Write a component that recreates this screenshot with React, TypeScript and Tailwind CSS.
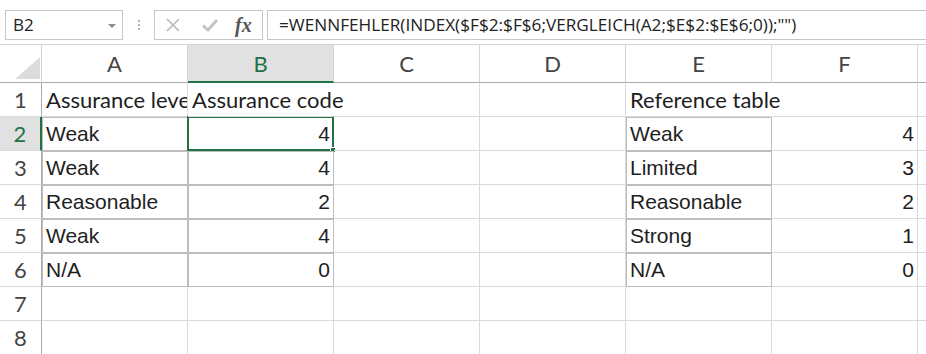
type CellValue = string | number | null;

const COLUMNS = ['A', 'B', 'C', 'D', 'E', 'F'];

const ROWS: CellValue[][] = [
  ['Assurance level', 'Assurance code', null, null, 'Reference table', null],
  ['Weak', 4, null, null, 'Weak', 4],
  ['Weak', 4, null, null, 'Limited', 3],
  ['Reasonable', 2, null, null, 'Reasonable', 2],
  ['Weak', 4, null, null, 'Strong', 1],
  ['N/A', 0, null, null, 'N/A', 0],
  [null, null, null, null, null, null],
  [null, null, null, null, null, null],
];

const FORMULA = '=WENNFEHLER(INDEX($F$2:$F$6;VERGLEICH(A2;$E$2:$E$6;0));"")';

// cells that carry the "all borders" format
function hasBorder(row: number, col: number) {
  if (row < 1 || row > 5) return false;
  return col === 0 || col === 1 || col === 4;
}

function FormulaBar() {
  return (
    <div className="mt-[10px] flex h-[30px] items-stretch font-['Open_Sans',sans-serif]">
      <div className="ml-[5px] flex w-[118px] items-center justify-between border border-[#c6c6c6] pl-[7px] pr-[6px] text-[17px] text-[#222]">
        <span>B2</span>
        <span className="mt-[1px] h-0 w-0 border-x-[4px] border-t-[4px] border-x-transparent border-t-[#8a8a8a]" />
      </div>
      <div className="flex w-[31px] flex-col items-center justify-center gap-[2px]">
        <span className="h-[2px] w-[2px] bg-[#b5b5b5]" />
        <span className="h-[2px] w-[2px] bg-[#b5b5b5]" />
        <span className="h-[2px] w-[2px] bg-[#b5b5b5]" />
      </div>
      <div className="flex w-[109px] items-center border border-[#c6c6c6]">
        <svg className="ml-[10px]" width="16" height="16" viewBox="0 0 16 16">
          <path d="M2 2 L14 14 M14 2 L2 14" stroke="#b9b9b9" strokeWidth="1.6" fill="none" />
        </svg>
        <svg className="ml-[20px]" width="18" height="16" viewBox="0 0 18 16">
          <path d="M2 8.5 L7 13 L16 3" stroke="#c4c4c4" strokeWidth="3" fill="none" />
        </svg>
        <span className="ml-[16px] font-['Liberation_Serif',serif] text-[20px] font-bold italic leading-none text-[#555]">
          fx
        </span>
      </div>
      <div className="ml-[4px] flex flex-1 items-center overflow-hidden whitespace-nowrap border border-r-0 border-[#c6c6c6] pl-[11px] text-[17.2px] text-[#222]">
        {FORMULA}
      </div>
    </div>
  );
}

function Cell({ value, row, col }: { value: CellValue; row: number; col: number }) {
  const bordered = hasBorder(row, col);
  const selected = row === 1 && col === 1;
  const isNumber = typeof value === 'number';
  // text in row 1 spills over into the empty neighbour
  const spills = row === 0 && (col === 1 || col === 4);
  const clipped = row === 0 && col === 0;

  return (
    <div
      className={`relative flex h-[34px] items-center whitespace-nowrap border-b ${
        spills ? 'border-r border-r-transparent' : 'border-r'
      } ${
        bordered
          ? 'border-[#bdbdbd] shadow-[inset_1px_1px_0_#bdbdbd]'
          : 'border-b-[#dadada] border-r-[#dadada]'
      } ${spills ? 'z-10 overflow-visible' : ''} ${clipped ? 'overflow-hidden' : ''} ${
        row === 0
          ? "font-['Lato',sans-serif] text-[22px]"
          : "font-['Liberation_Sans',Arial,sans-serif] text-[21px]"
      } ${isNumber ? 'justify-end pr-[3px]' : 'pl-[4px]'}`}
    >
      {value !== null ? <span>{value}</span> : null}
      {selected ? (
        <>
          <span className="pointer-events-none absolute -left-[1px] -top-[1px] bottom-[-1px] right-[-1px] border-2 border-[#217346]" />
          <span className="absolute -bottom-[3px] -right-[3px] h-[6px] w-[6px] border border-white bg-[#217346]" />
        </>
      ) : null}
    </div>
  );
}

export default function App() {
  return (
    <div className="h-[354px] w-[926px] overflow-hidden bg-white">
      <FormulaBar />

      <div className="mt-[4px] grid grid-cols-[42px_repeat(6,146px)_1fr] border-t border-[#d4d4d4] font-['Lato',sans-serif] text-[22px] text-[#1e1e1e]">
        {/* column headers */}
        <div className="flex h-[38px] items-end justify-end border-b border-r border-b-[#ababab] border-r-[#d4d4d4] pb-[3px] pr-[1px]">
          <svg width="25" height="22" viewBox="0 0 25 22">
            <polygon points="25,0 25,22 0,22" fill="#dcdcdc" />
          </svg>
        </div>
        {COLUMNS.map((name) => {
          const active = name === 'B';
          return (
            <div
              key={name}
              className={`flex h-[38px] items-center justify-center border-r border-r-[#d4d4d4] ${
                active
                  ? 'border-b-2 border-b-[#217346] bg-[#e1e1e1] text-[#217346]'
                  : 'border-b border-b-[#ababab] text-[#444]'
              }`}
            >
              {name}
            </div>
          );
        })}
        <div className="h-[38px] border-b border-b-[#ababab]" />

        {ROWS.map((row, rowIndex) => (
          <div key={rowIndex} className="contents">
            <div
              className={`flex h-[34px] items-center justify-center border-b border-b-[#dadada] ${
                rowIndex === 1
                  ? 'border-r-2 border-r-[#217346] bg-[#e1e1e1] text-[#217346]'
                  : 'border-r border-r-[#ababab] text-[#444]'
              }`}
            >
              {rowIndex + 1}
            </div>
            {row.map((value, colIndex) => (
              <Cell key={colIndex} value={value} row={rowIndex} col={colIndex} />
            ))}
            <div className="h-[34px] border-b border-b-[#dadada]" />
          </div>
        ))}
      </div>
    </div>
  );
}
